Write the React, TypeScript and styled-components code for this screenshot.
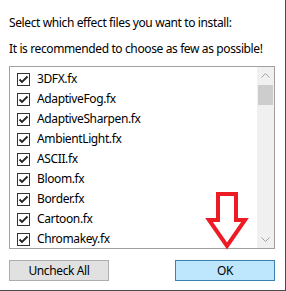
import { FunctionComponent } from "react";
import styled, { createGlobalStyle } from "styled-components";

const GlobalStyle = createGlobalStyle`
  html, body {
    margin: 0;
    padding: 0;
    background: #ffffff;
  }
  * {
    box-sizing: border-box;
  }
`;

const Dialog = styled.div`
  position: relative;
  width: 286px;
  height: 291px;
  background: #ffffff;
  border-right: 1px solid #4a4a4a;
  border-bottom: 1px solid #4a4a4a;
  padding: 15px 0 0 9px;
  font-family: "Noto Sans", "Open Sans", sans-serif;
  font-size: 12px;
  letter-spacing: -0.38px;
  color: #000000;
  display: flex;
  flex-direction: column;
`;

const Label = styled.p<{ $gap: number }>`
  margin: 0 0 ${(p) => p.$gap}px 0;
  line-height: 16px;
  white-space: nowrap;
`;

const ListBox = styled.div`
  width: 266px;
  height: 183px;
  border: 1px solid #a0a0a0;
  display: flex;
`;

const Items = styled.ul`
  flex: 1;
  list-style: none;
  margin: 0;
  padding: 6px 0 0 7px;
  overflow: hidden;
`;

const Item = styled.li`
  height: 20px;
  display: flex;
  align-items: flex-start;
  gap: 7px;
  span {
    line-height: 14px;
    margin-top: -1px;
  }
`;

const Box = styled.svg`
  width: 13px;
  height: 13px;
  flex: none;
`;

const ScrollBar = styled.div`
  width: 17px;
  background: #f0f0f0;
  display: flex;
  flex-direction: column;
  align-items: center;
`;

const ArrowBtn = styled.div`
  width: 17px;
  height: 17px;
  display: flex;
  align-items: center;
  justify-content: center;
`;

const Thumb = styled.div`
  width: 15px;
  height: 20px;
  margin-top: 1px;
  background: #cdcdcd;
`;

const Spacer = styled.div`
  flex: 1;
`;

const ButtonRow = styled.div`
  width: 266px;
  margin-top: 11px;
  display: flex;
  justify-content: space-between;
`;

const Button = styled.button<{ $primary?: boolean }>`
  width: 100px;
  height: 21px;
  padding: 0;
  font-family: inherit;
  font-size: 12px;
  letter-spacing: inherit;
  color: #000000;
  background: ${(p) => (p.$primary ? "#bee6fd" : "#e1e1e1")};
  border: 1px solid ${(p) => (p.$primary ? "#3c7fb1" : "#adadad")};
`;

const Arrow = styled.svg`
  position: absolute;
  left: 202px;
  top: 189px;
  width: 50px;
  height: 62px;
`;

const files = [
  "3DFX.fx",
  "AdaptiveFog.fx",
  "AdaptiveSharpen.fx",
  "AmbientLight.fx",
  "ASCII.fx",
  "Bloom.fx",
  "Border.fx",
  "Cartoon.fx",
  "Chromakey.fx",
];

const CheckBox: FunctionComponent = () => (
  <Box viewBox="0 0 13 13">
    <rect x="0.5" y="0.5" width="12" height="12" fill="#fff" stroke="#333" />
    <path d="M2.5 6.5 L5 9 L10.5 3.5" fill="none" stroke="#222" strokeWidth="1.8" />
  </Box>
);

const App: FunctionComponent = () => {
  return (
    <Dialog>
      <GlobalStyle />
      <Label $gap={10}>Select which effect files you want to install:</Label>
      <Label $gap={9}>It is recommended to choose as few as possible!</Label>
      <ListBox>
        <Items>
          {files.map((f) => (
            <Item key={f}>
              <CheckBox />
              <span>{f}</span>
            </Item>
          ))}
        </Items>
        <ScrollBar>
          <ArrowBtn>
            <svg width="9" height="5" viewBox="0 0 9 5">
              <path d="M0.5 4.5 L4.5 0.5 L8.5 4.5" fill="none" stroke="#a3a3a3" />
            </svg>
          </ArrowBtn>
          <Thumb />
          <Spacer />
          <ArrowBtn>
            <svg width="9" height="5" viewBox="0 0 9 5">
              <path d="M0.5 0.5 L4.5 4.5 L8.5 0.5" fill="none" stroke="#a3a3a3" />
            </svg>
          </ArrowBtn>
        </ScrollBar>
      </ListBox>
      <ButtonRow>
        <Button>Uncheck All</Button>
        <Button $primary>OK</Button>
      </ButtonRow>
      <Arrow viewBox="0 0 50 62">
        <polygon
          points="16,5 34,5 34,31 43,31 25,57 7,31 16,31"
          fill="#ffffff"
          stroke="#ed1c24"
          strokeWidth="4"
          strokeLinejoin="miter"
        />
      </Arrow>
    </Dialog>
  );
};

export default App;
